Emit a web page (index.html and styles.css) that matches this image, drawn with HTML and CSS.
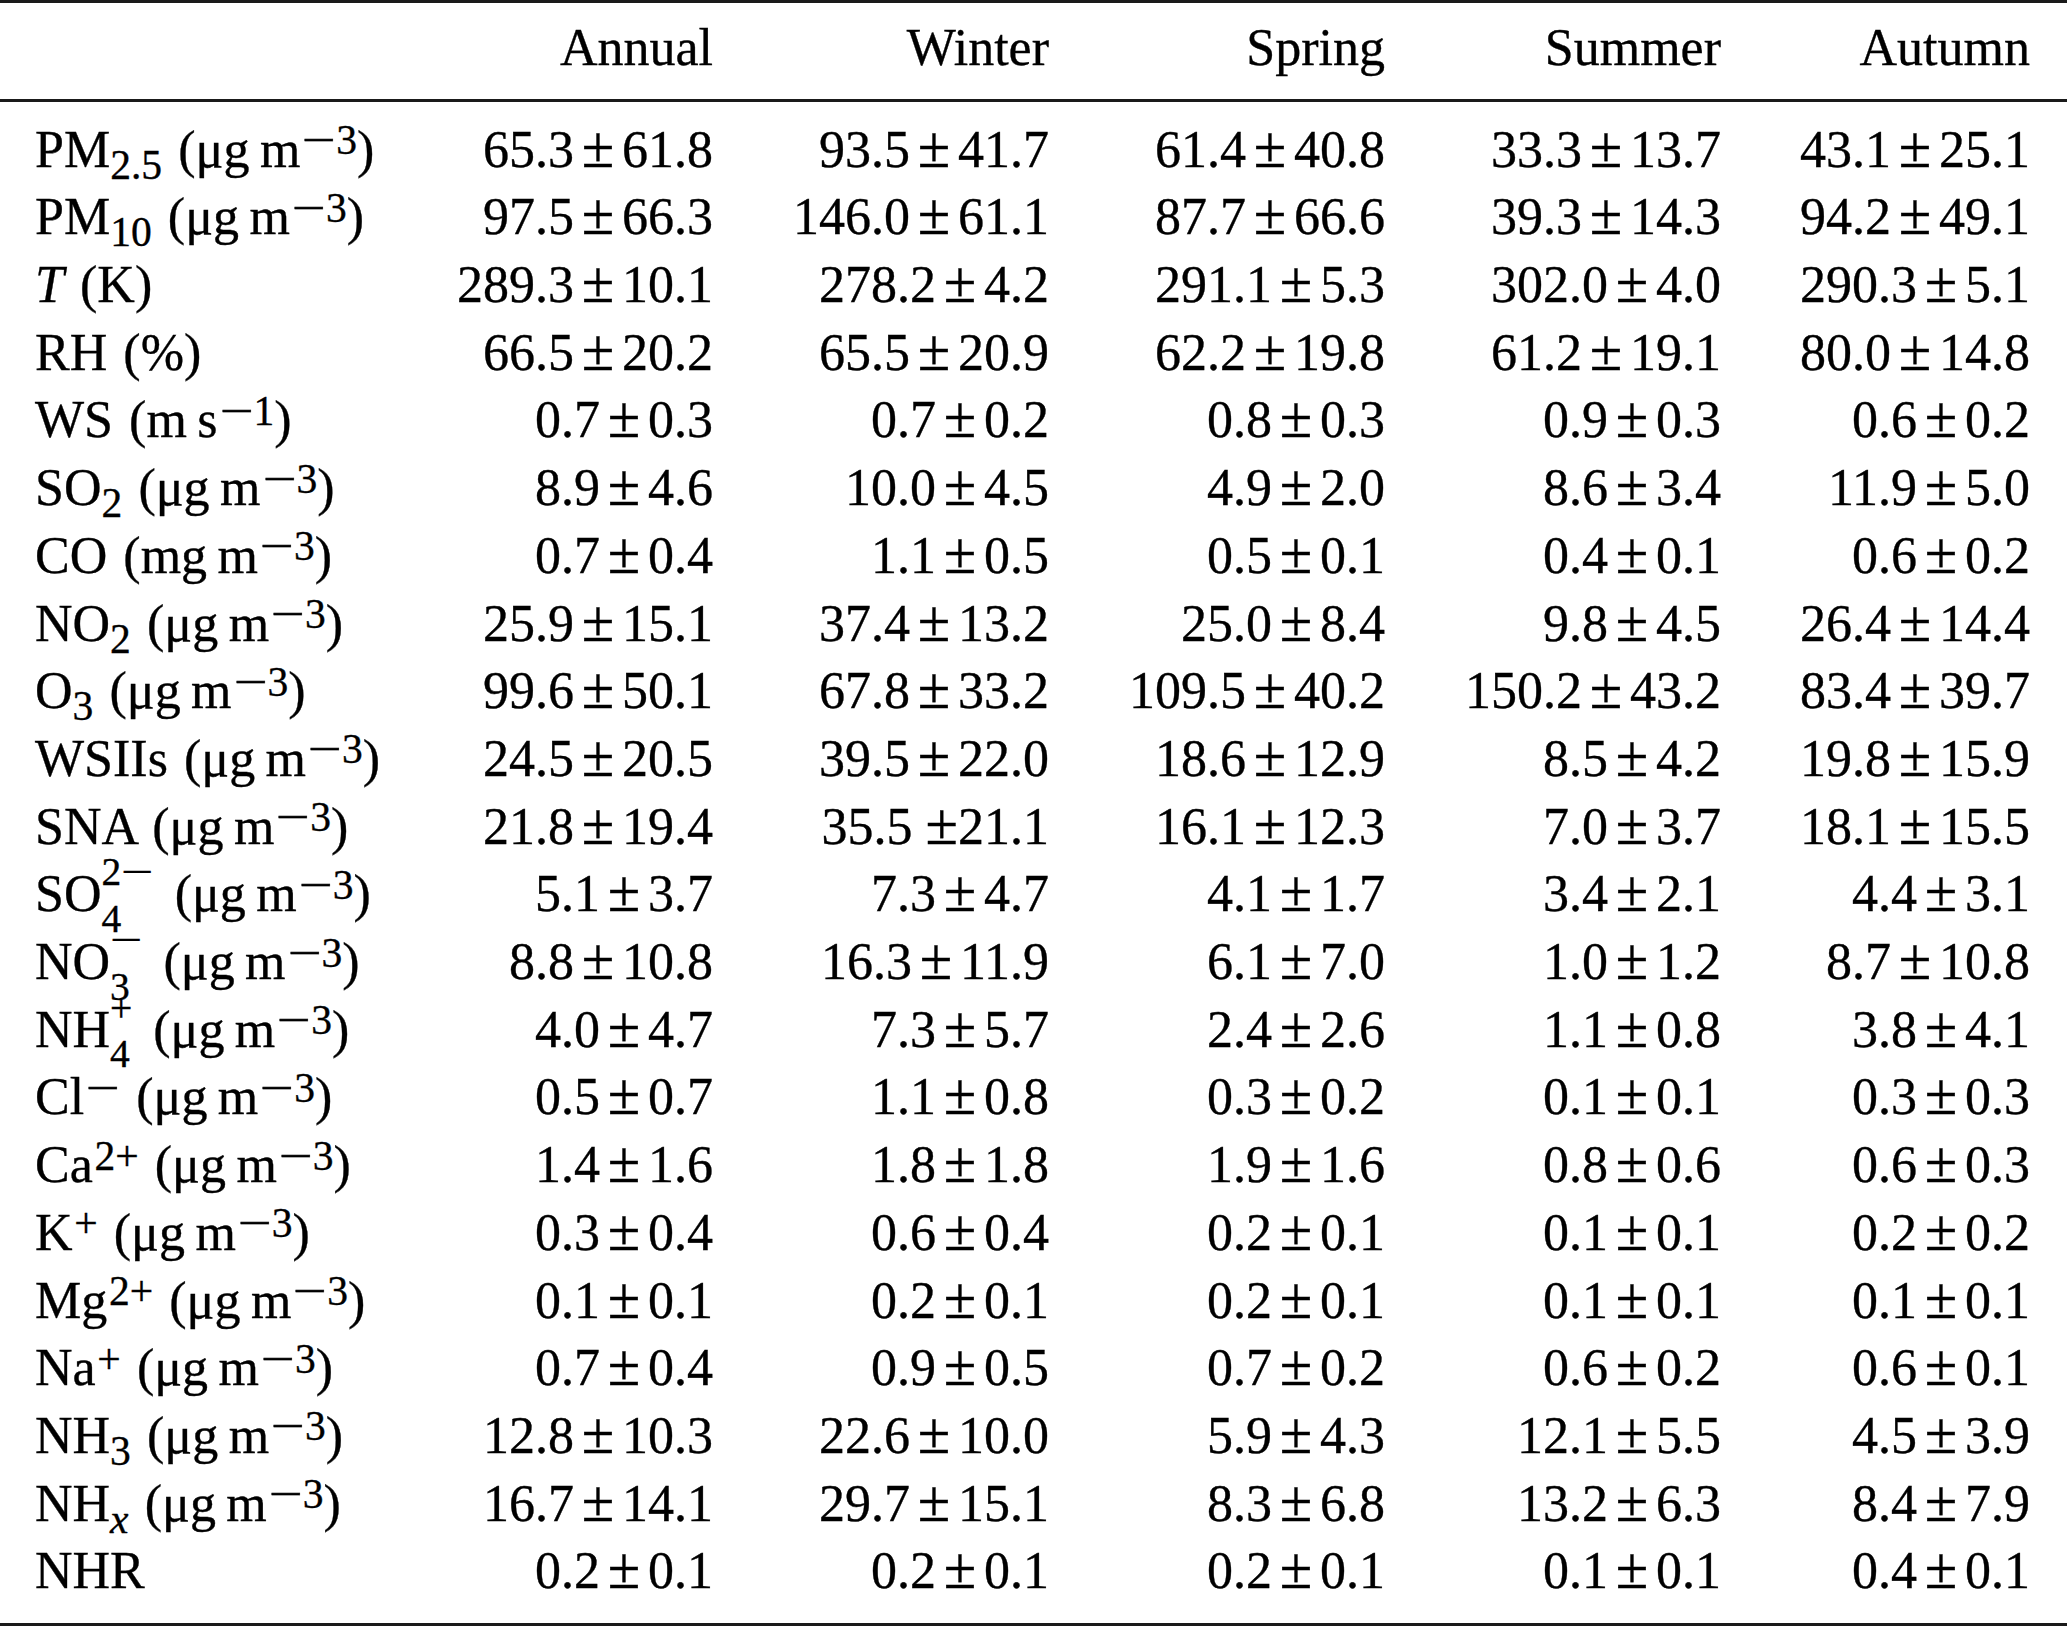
FILE: index.html
```html
<!DOCTYPE html>
<html lang="en">
<head>
<meta charset="utf-8">
<title>Seasonal statistics</title>
<link rel="stylesheet" href="styles.css">
</head>
<body>
<table class="tbl">
  <colgroup>
    <col class="c-label">
    <col class="c-val">
    <col class="c-val">
    <col class="c-val">
    <col class="c-val">
    <col class="c-last">
  </colgroup>
  <thead>
    <tr>
      <th class="lab"></th>
      <th>Annual</th>
      <th>Winter</th>
      <th>Spring</th>
      <th>Summer</th>
      <th>Autumn</th>
    </tr>
  </thead>
  <tbody>
    <tr><td class="lab">PM<sub>2.5</sub> (μg&#8201;m<sup><span class="mn">−</span>3</sup>)</td><td>65.3<span class="pm">±</span>61.8</td><td>93.5<span class="pm">±</span>41.7</td><td>61.4<span class="pm">±</span>40.8</td><td>33.3<span class="pm">±</span>13.7</td><td>43.1<span class="pm">±</span>25.1</td></tr>
    <tr><td class="lab">PM<sub>10</sub> (μg&#8201;m<sup><span class="mn">−</span>3</sup>)</td><td>97.5<span class="pm">±</span>66.3</td><td>146.0<span class="pm">±</span>61.1</td><td>87.7<span class="pm">±</span>66.6</td><td>39.3<span class="pm">±</span>14.3</td><td>94.2<span class="pm">±</span>49.1</td></tr>
    <tr><td class="lab"><i>T</i> (K)</td><td>289.3<span class="pm">±</span>10.1</td><td>278.2<span class="pm">±</span>4.2</td><td>291.1<span class="pm">±</span>5.3</td><td>302.0<span class="pm">±</span>4.0</td><td>290.3<span class="pm">±</span>5.1</td></tr>
    <tr><td class="lab">RH (%)</td><td>66.5<span class="pm">±</span>20.2</td><td>65.5<span class="pm">±</span>20.9</td><td>62.2<span class="pm">±</span>19.8</td><td>61.2<span class="pm">±</span>19.1</td><td>80.0<span class="pm">±</span>14.8</td></tr>
    <tr><td class="lab">WS (m&#8201;s<sup><span class="mn">−</span>1</sup>)</td><td>0.7<span class="pm">±</span>0.3</td><td>0.7<span class="pm">±</span>0.2</td><td>0.8<span class="pm">±</span>0.3</td><td>0.9<span class="pm">±</span>0.3</td><td>0.6<span class="pm">±</span>0.2</td></tr>
    <tr><td class="lab">SO<sub>2</sub> (μg&#8201;m<sup><span class="mn">−</span>3</sup>)</td><td>8.9<span class="pm">±</span>4.6</td><td>10.0<span class="pm">±</span>4.5</td><td>4.9<span class="pm">±</span>2.0</td><td>8.6<span class="pm">±</span>3.4</td><td>11.9<span class="pm">±</span>5.0</td></tr>
    <tr><td class="lab">CO (mg&#8201;m<sup><span class="mn">−</span>3</sup>)</td><td>0.7<span class="pm">±</span>0.4</td><td>1.1<span class="pm">±</span>0.5</td><td>0.5<span class="pm">±</span>0.1</td><td>0.4<span class="pm">±</span>0.1</td><td>0.6<span class="pm">±</span>0.2</td></tr>
    <tr><td class="lab">NO<sub>2</sub> (μg&#8201;m<sup><span class="mn">−</span>3</sup>)</td><td>25.9<span class="pm">±</span>15.1</td><td>37.4<span class="pm">±</span>13.2</td><td>25.0<span class="pm">±</span>8.4</td><td>9.8<span class="pm">±</span>4.5</td><td>26.4<span class="pm">±</span>14.4</td></tr>
    <tr><td class="lab">O<sub>3</sub> (μg&#8201;m<sup><span class="mn">−</span>3</sup>)</td><td>99.6<span class="pm">±</span>50.1</td><td>67.8<span class="pm">±</span>33.2</td><td>109.5<span class="pm">±</span>40.2</td><td>150.2<span class="pm">±</span>43.2</td><td>83.4<span class="pm">±</span>39.7</td></tr>
    <tr><td class="lab">WSIIs (μg&#8201;m<sup><span class="mn">−</span>3</sup>)</td><td>24.5<span class="pm">±</span>20.5</td><td>39.5<span class="pm">±</span>22.0</td><td>18.6<span class="pm">±</span>12.9</td><td>8.5<span class="pm">±</span>4.2</td><td>19.8<span class="pm">±</span>15.9</td></tr>
    <tr><td class="lab">SNA (μg&#8201;m<sup><span class="mn">−</span>3</sup>)</td><td>21.8<span class="pm">±</span>19.4</td><td>35.5 <span class="pm pm-tight">±</span>21.1</td><td>16.1<span class="pm">±</span>12.3</td><td>7.0<span class="pm">±</span>3.7</td><td>18.1<span class="pm">±</span>15.5</td></tr>
    <tr><td class="lab">SO<span class="stack"><span>2<span class="mn">−</span></span><span>4</span></span> (μg&#8201;m<sup><span class="mn">−</span>3</sup>)</td><td>5.1<span class="pm">±</span>3.7</td><td>7.3<span class="pm">±</span>4.7</td><td>4.1<span class="pm">±</span>1.7</td><td>3.4<span class="pm">±</span>2.1</td><td>4.4<span class="pm">±</span>3.1</td></tr>
    <tr><td class="lab">NO<span class="stack"><span><span class="mn">−</span></span><span>3</span></span> (μg&#8201;m<sup><span class="mn">−</span>3</sup>)</td><td>8.8<span class="pm">±</span>10.8</td><td>16.3<span class="pm">±</span>11.9</td><td>6.1<span class="pm">±</span>7.0</td><td>1.0<span class="pm">±</span>1.2</td><td>8.7<span class="pm">±</span>10.8</td></tr>
    <tr><td class="lab">NH<span class="stack"><span>+</span><span>4</span></span> (μg&#8201;m<sup><span class="mn">−</span>3</sup>)</td><td>4.0<span class="pm">±</span>4.7</td><td>7.3<span class="pm">±</span>5.7</td><td>2.4<span class="pm">±</span>2.6</td><td>1.1<span class="pm">±</span>0.8</td><td>3.8<span class="pm">±</span>4.1</td></tr>
    <tr><td class="lab">Cl<sup><span class="mn">−</span></sup> (μg&#8201;m<sup><span class="mn">−</span>3</sup>)</td><td>0.5<span class="pm">±</span>0.7</td><td>1.1<span class="pm">±</span>0.8</td><td>0.3<span class="pm">±</span>0.2</td><td>0.1<span class="pm">±</span>0.1</td><td>0.3<span class="pm">±</span>0.3</td></tr>
    <tr><td class="lab">Ca<sup>2+</sup> (μg&#8201;m<sup><span class="mn">−</span>3</sup>)</td><td>1.4<span class="pm">±</span>1.6</td><td>1.8<span class="pm">±</span>1.8</td><td>1.9<span class="pm">±</span>1.6</td><td>0.8<span class="pm">±</span>0.6</td><td>0.6<span class="pm">±</span>0.3</td></tr>
    <tr><td class="lab">K<sup>+</sup> (μg&#8201;m<sup><span class="mn">−</span>3</sup>)</td><td>0.3<span class="pm">±</span>0.4</td><td>0.6<span class="pm">±</span>0.4</td><td>0.2<span class="pm">±</span>0.1</td><td>0.1<span class="pm">±</span>0.1</td><td>0.2<span class="pm">±</span>0.2</td></tr>
    <tr><td class="lab">Mg<sup>2+</sup> (μg&#8201;m<sup><span class="mn">−</span>3</sup>)</td><td>0.1<span class="pm">±</span>0.1</td><td>0.2<span class="pm">±</span>0.1</td><td>0.2<span class="pm">±</span>0.1</td><td>0.1<span class="pm">±</span>0.1</td><td>0.1<span class="pm">±</span>0.1</td></tr>
    <tr><td class="lab">Na<sup>+</sup> (μg&#8201;m<sup><span class="mn">−</span>3</sup>)</td><td>0.7<span class="pm">±</span>0.4</td><td>0.9<span class="pm">±</span>0.5</td><td>0.7<span class="pm">±</span>0.2</td><td>0.6<span class="pm">±</span>0.2</td><td>0.6<span class="pm">±</span>0.1</td></tr>
    <tr><td class="lab">NH<sub>3</sub> (μg&#8201;m<sup><span class="mn">−</span>3</sup>)</td><td>12.8<span class="pm">±</span>10.3</td><td>22.6<span class="pm">±</span>10.0</td><td>5.9<span class="pm">±</span>4.3</td><td>12.1<span class="pm">±</span>5.5</td><td>4.5<span class="pm">±</span>3.9</td></tr>
    <tr><td class="lab">NH<sub><i>x</i></sub> (μg&#8201;m<sup><span class="mn">−</span>3</sup>)</td><td>16.7<span class="pm">±</span>14.1</td><td>29.7<span class="pm">±</span>15.1</td><td>8.3<span class="pm">±</span>6.8</td><td>13.2<span class="pm">±</span>6.3</td><td>8.4<span class="pm">±</span>7.9</td></tr>
    <tr><td class="lab">NHR</td><td>0.2<span class="pm">±</span>0.1</td><td>0.2<span class="pm">±</span>0.1</td><td>0.2<span class="pm">±</span>0.1</td><td>0.1<span class="pm">±</span>0.1</td><td>0.4<span class="pm">±</span>0.1</td></tr>
  </tbody>
</table>
</body>
</html>
```

FILE: styles.css
```css
html, body {
  margin: 0;
  padding: 0;
  background: #ffffff;
}

body {
  font-family: "Liberation Serif", "Times New Roman", serif;
  color: #000000;
}

.tbl {
  width: 2067px;
  table-layout: fixed;
  border-collapse: separate;
  border-spacing: 0;
  font-size: 52px;
  -webkit-text-stroke: 0.35px #000;
}

.c-label { width: 414px; }
.c-val { width: 336px; }
.c-last { width: 309px; }

.tbl th,
.tbl td {
  height: 67.7px;
  line-height: 67.7px;
  padding: 0 37px;
  text-align: right;
  white-space: nowrap;
  font-weight: normal;
  box-sizing: border-box;
}

.tbl th.lab,
.tbl td.lab {
  text-align: left;
  padding-left: 35px;
  padding-right: 0;
  word-spacing: 0.06em;
}

.tbl thead th {
  border-top: 3px solid #1a1a1a;
  border-bottom: 3px solid #1a1a1a;
  padding-top: 10.6px;
  padding-bottom: 17.7px;
  height: auto;
}

.tbl tbody tr:first-child td {
  padding-top: 13.6px;
  height: auto;
}

.tbl tbody tr:last-child td {
  padding-bottom: 17.7px;
  border-bottom: 3px solid #1a1a1a;
  height: auto;
}

.pm {
  font-size: 1.14em;
  line-height: 0;
  margin: 0 0.13em;
}

.pm-tight {
  margin: 0;
}

.tbl sub,
.tbl sup {
  font-size: 0.8em;
  line-height: 0;
}

.tbl sub {
  vertical-align: -0.3em;
}

.tbl sup {
  vertical-align: 0.3em;
  margin-left: 0.04em;
}

.mn {
  display: inline-block;
  line-height: 0;
  transform: scaleX(1.45);
  margin: 0 0.13em;
}

.stack {
  display: inline-flex;
  flex-direction: column;
  align-items: flex-start;
  font-size: 0.76em;
  line-height: 1.18;
  vertical-align: 0.66em;
  margin: -30px 0.12em -30px 0;
}

.stack > span {
  display: block;
}
```
